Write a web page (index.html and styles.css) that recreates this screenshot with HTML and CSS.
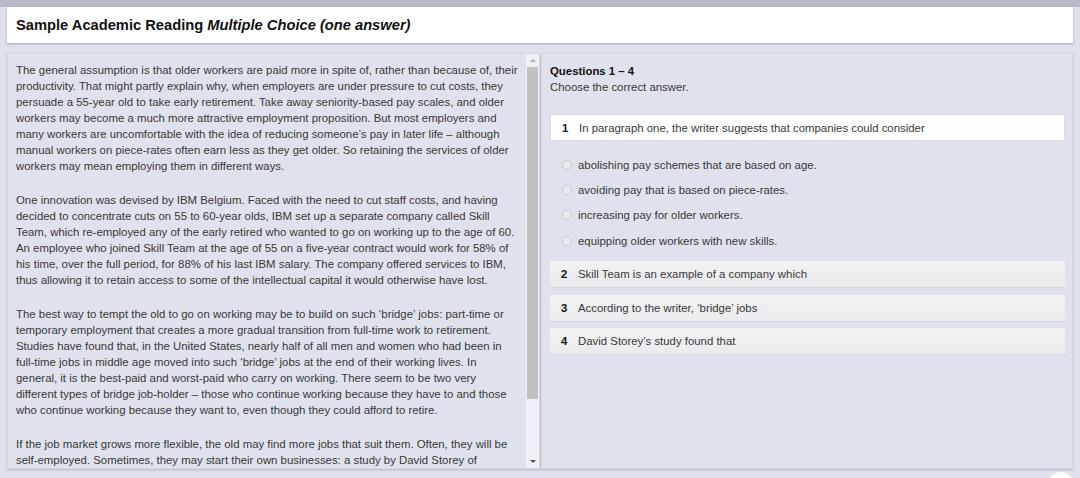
FILE: index.html
```html
<!DOCTYPE html>
<html lang="en">
<head>
    <meta charset="UTF-8">
    <meta name="viewport" content="width=device-width, initial-scale=1.0">
    <title>Sample Academic Reading</title>
    <link rel="stylesheet" href="styles.css">
</head>
<body>
    <div class="topbar"></div>
    <div class="header">
        <h1>Sample Academic Reading <em>Multiple Choice (one answer)</em></h1>
    </div>

    <div class="panels">
        <div class="panel reading">
            <div class="passage">
                <p>The general assumption is that older workers are paid more in spite of, rather than because of, their productivity. That might partly explain why, when employers are under pressure to cut costs, they persuade a 55-year old to take early retirement. Take away seniority-based pay scales, and older workers may become a much more attractive employment proposition. But most employers and many workers are uncomfortable with the idea of reducing someone’s pay in later life – although manual workers on piece-rates often earn less as they get older. So retaining the services of older workers may mean employing them in different ways.</p>
                <p>One innovation was devised by IBM Belgium. Faced with the need to cut staff costs, and having decided to concentrate cuts on 55 to 60-year olds, IBM set up a separate company called Skill Team, which re-employed any of the early retired who wanted to go on working up to the age of 60. An employee who joined Skill Team at the age of 55 on a five-year contract would work for 58% of his time, over the full period, for 88% of his last IBM salary. The company offered services to IBM, thus allowing it to retain access to some of the intellectual capital it would otherwise have lost.</p>
                <p>The best way to tempt the old to go on working may be to build on such ‘bridge’ jobs: part-time or temporary employment that creates a more gradual transition from full-time work to retirement. Studies have found that, in the United States, nearly half of all men and women who had been in full-time jobs in middle age moved into such ‘bridge’ jobs at the end of their working lives. In general, it is the best-paid and worst-paid who carry on working. There seem to be two very different types of bridge job-holder – those who continue working because they have to and those who continue working because they want to, even though they could afford to retire.</p>
                <p>If the job market grows more flexible, the old may find more jobs that suit them. Often, they will be self-employed. Sometimes, they may start their own businesses: a study by David Storey of Warwick University found that in Britain 70% of businesses started by people over 55 survived, compared with an overall national average of only 19%.</p>
            </div>
            <div class="scrollbar">
                <span class="arrow up"></span>
                <span class="thumb"></span>
                <span class="arrow down"></span>
            </div>
        </div>

        <div class="panel questions">
            <div class="intro">
                <strong>Questions 1 – 4</strong>
                <span>Choose the correct answer.</span>
            </div>

            <div class="question open"><b>1</b> In paragraph one, the writer suggests that companies could consider</div>
            <ul class="options">
                <li><span class="radio"></span>abolishing pay schemes that are based on age.</li>
                <li><span class="radio"></span>avoiding pay that is based on piece-rates.</li>
                <li><span class="radio"></span>increasing pay for older workers.</li>
                <li><span class="radio"></span>equipping older workers with new skills.</li>
            </ul>

            <div class="question"><b>2</b> Skill Team is an example of a company which</div>
            <div class="question"><b>3</b> According to the writer, ‘bridge’ jobs</div>
            <div class="question"><b>4</b> David Storey’s study found that</div>
        </div>
    </div>

    <div class="fab"></div>
</body>
</html>
```

FILE: styles.css
```css
body {
    margin: 0;
    background-color: #dde1ec;
    font-family: "Liberation Sans", Arial, sans-serif;
    color: #383838;
    height: 478px;
    overflow: hidden;
    position: relative;
}
.topbar {
    height: 7px;
    background-color: #b7bbc8;
}
.header {
    margin: 0 7px;
    height: 36px;
    background: #fff;
    box-shadow: 0 1px 2px rgba(0, 0, 0, 0.25);
    display: flex;
    align-items: center;
    padding-left: 9px;
}
.header h1 {
    margin: 0;
    font-size: 14.7px;
    font-weight: bold;
    color: #111;
}
.header em {
    font-style: italic;
}
.panels {
    display: flex;
    margin: 10px 7px 0;
    height: 416px;
    gap: 1px;
}
.panel {
    background-color: #dfe2ed;
    box-shadow: 0 1px 2px rgba(0, 0, 0, 0.18);
    border: 1px solid #d3d7e2;
    box-sizing: border-box;
}
.reading {
    width: 533px;
    display: flex;
}
.passage {
    flex: 1;
    overflow: hidden;
    padding: 8px 8px 0 8px;
    font-size: 11.4px;
    line-height: 16px;
}
.passage p {
    margin: 0 0 18px;
}
.scrollbar {
    width: 13px;
    background-color: #eef0f5;
    display: flex;
    flex-direction: column;
    align-items: center;
}
.thumb {
    width: 11px;
    height: 332px;
    background-color: #c1c1c1;
}
.arrow {
    width: 0;
    height: 0;
    border-left: 3px solid transparent;
    border-right: 3px solid transparent;
    margin: 5px 0;
}
.arrow.up {
    border-bottom: 3px solid #b0b0b0;
}
.arrow.down {
    margin-top: auto;
    border-top: 3px solid #555;
}
.questions {
    flex: 1;
    padding: 9px 7px 0 8px;
    font-size: 11.4px;
}
.intro {
    display: flex;
    flex-direction: column;
    line-height: 16px;
    margin-bottom: 19px;
}
.intro strong {
    color: #111;
}
.question {
    height: 27px;
    box-sizing: border-box;
    display: flex;
    align-items: center;
    padding-left: 11px;
    margin-bottom: 6.5px;
    background: linear-gradient(#f2f2f3, #ebebed);
    border-bottom: 1px solid #d6d8df;
}
.question b {
    width: 17px;
    color: #111;
}
.question.open {
    background: #fff;
    border: 1px solid #d8dae0;
    margin-bottom: 11px;
}
.options {
    list-style: none;
    margin: 0 0 8px;
    padding: 0 0 0 12px;
}
.options li {
    height: 25.3px;
    display: flex;
    align-items: center;
}
.radio {
    width: 8px;
    height: 8px;
    border-radius: 50%;
    border: 1px solid #c6c8ce;
    background: #e9eaee;
    margin-right: 6px;
}
.fab {
    position: absolute;
    right: 6px;
    bottom: -20px;
    width: 26px;
    height: 26px;
    border-radius: 50%;
    background: #fff;
}
```
